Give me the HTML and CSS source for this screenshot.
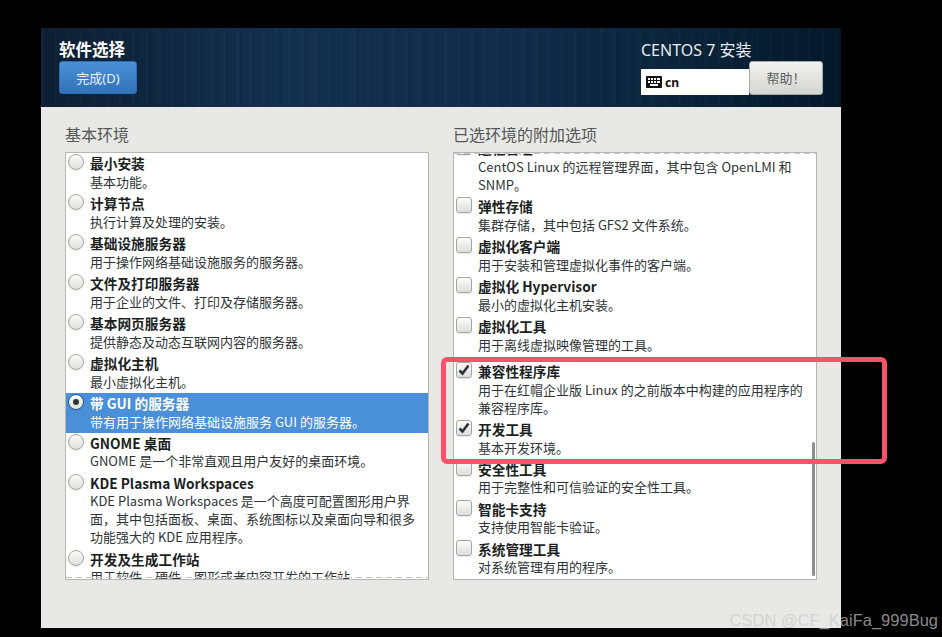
FILE: index.html
```html
<!DOCTYPE html>
<html lang="zh-CN">
<head>
    <meta charset="UTF-8">
    <title>软件选择 - CENTOS 7 安装</title>
    <link rel="stylesheet" href="styles.css">
</head>
<body>

    <div class="window">
        <header class="topbar">
            <div class="topbar-left">
                <h1>软件选择</h1>
                <button class="done-btn" type="button">完成(D)</button>
            </div>
            <div class="topbar-right">
                <div class="product">CENTOS 7 安装</div>
                <div class="topbar-tools">
                    <div class="layout-box">
                        <svg class="kbd-icon" width="16" height="12" viewBox="0 0 16 12">
                            <rect width="16" height="12" rx="1" fill="#111"/>
                            <g fill="#fff">
                                <rect x="2" y="2" width="2" height="2"/><rect x="5" y="2" width="2" height="2"/><rect x="8" y="2" width="2" height="2"/><rect x="11" y="2" width="3" height="2"/>
                                <rect x="2" y="5" width="2" height="2"/><rect x="5" y="5" width="2" height="2"/><rect x="8" y="5" width="2" height="2"/><rect x="11" y="5" width="3" height="2"/>
                                <rect x="4" y="8" width="8" height="2"/>
                            </g>
                        </svg>
                        <span>cn</span>
                    </div>
                    <button class="help-btn" type="button">帮助！</button>
                </div>
            </div>
        </header>

        <main class="content">
            <section class="col">
                <h2>基本环境</h2>
                <div class="list list-env">
                    <div class="item"><i class="radio"></i><div class="text"><b>最小安装</b><p>基本功能。</p></div></div>
                    <div class="item"><i class="radio"></i><div class="text"><b>计算节点</b><p>执行计算及处理的安装。</p></div></div>
                    <div class="item"><i class="radio"></i><div class="text"><b>基础设施服务器</b><p>用于操作网络基础设施服务的服务器。</p></div></div>
                    <div class="item"><i class="radio"></i><div class="text"><b>文件及打印服务器</b><p>用于企业的文件、打印及存储服务器。</p></div></div>
                    <div class="item"><i class="radio"></i><div class="text"><b>基本网页服务器</b><p>提供静态及动态互联网内容的服务器。</p></div></div>
                    <div class="item"><i class="radio"></i><div class="text"><b>虚拟化主机</b><p>最小虚拟化主机。</p></div></div>
                    <div class="item selected"><i class="radio on"></i><div class="text"><b>带 GUI 的服务器</b><p>带有用于操作网络基础设施服务 GUI 的服务器。</p></div></div>
                    <div class="item"><i class="radio"></i><div class="text"><b>GNOME 桌面</b><p>GNOME 是一个非常直观且用户友好的桌面环境。</p></div></div>
                    <div class="item"><i class="radio"></i><div class="text"><b>KDE Plasma Workspaces</b><p>KDE Plasma Workspaces 是一个高度可配置图形用户界面，其中包括面板、桌面、系统图标以及桌面向导和很多功能强大的 KDE 应用程序。</p></div></div>
                    <div class="item"><i class="radio"></i><div class="text"><b>开发及生成工作站</b><p>用于软件、硬件、图形或者内容开发的工作站。</p></div></div>
                    <div class="edge edge-bottom"></div>
                </div>
            </section>

            <section class="col">
                <h2>已选环境的附加选项</h2>
                <div class="list list-addons">
                    <div class="addons-inner">
                        <div class="item"><i class="check"></i><div class="text"><b>远程管理</b><p>CentOS Linux 的远程管理界面，其中包含 OpenLMI 和 SNMP。</p></div></div>
                        <div class="item"><i class="check"></i><div class="text"><b>弹性存储</b><p>集群存储，其中包括 GFS2 文件系统。</p></div></div>
                        <div class="item"><i class="check"></i><div class="text"><b>虚拟化客户端</b><p>用于安装和管理虚拟化事件的客户端。</p></div></div>
                        <div class="item"><i class="check"></i><div class="text"><b>虚拟化 Hypervisor</b><p>最小的虚拟化主机安装。</p></div></div>
                        <div class="item"><i class="check"></i><div class="text"><b>虚拟化工具</b><p>用于离线虚拟映像管理的工具。</p></div></div>
                        <div class="item after-sep"><i class="check"><svg width="16" height="16" viewBox="0 0 16 16"><path d="M3.5 8.5 L6.5 11.5 L12.5 3.5" fill="none" stroke="#2e3436" stroke-width="2.6"/></svg></i><div class="text"><b>兼容性程序库</b><p>用于在红帽企业版 Linux 的之前版本中构建的应用程序的兼容程序库。</p></div></div>
                        <div class="item"><i class="check"><svg width="16" height="16" viewBox="0 0 16 16"><path d="M3.5 8.5 L6.5 11.5 L12.5 3.5" fill="none" stroke="#2e3436" stroke-width="2.6"/></svg></i><div class="text"><b>开发工具</b><p>基本开发环境。</p></div></div>
                        <div class="item"><i class="check"></i><div class="text"><b>安全性工具</b><p>用于完整性和可信验证的安全性工具。</p></div></div>
                        <div class="item"><i class="check"></i><div class="text"><b>智能卡支持</b><p>支持使用智能卡验证。</p></div></div>
                        <div class="item"><i class="check"></i><div class="text"><b>系统管理工具</b><p>对系统管理有用的程序。</p></div></div>
                    </div>
                    <div class="edge edge-top"></div>
                    <div class="scroll-thumb"></div>
                </div>
            </section>
        </main>
    </div>

    <div class="annotation"></div>
    <div class="watermark">CSDN @CF_KaiFa_999Bug</div>

</body>
</html>
```

FILE: styles.css
```css
/* Basic reset */
* {
    margin: 0;
    padding: 0;
    box-sizing: border-box;
}

html, body {
    height: 100%;
    background: #000;
    overflow: hidden;
}

body {
    position: relative;
    padding: 28px 101px 9px 41px;
    font-family: "Noto Sans", "Noto Sans CJK SC", sans-serif;
    font-size: 13px;
    color: #2e3436;
}

.window {
    width: 800px;
    height: 600px;
    background: #e8e8e7;
}

/* Top bar */
.topbar {
    height: 79px;
    display: flex;
    justify-content: space-between;
    padding: 11px 18px 0;
    color: #fff;
    background:
        repeating-linear-gradient(90deg, rgba(255, 255, 255, 0.015) 0 3px, rgba(0, 0, 0, 0.04) 3px 7px, rgba(255, 255, 255, 0) 7px 13px),
        linear-gradient(90deg, #0d1f33 0%, #13304f 30%, #112c4a 60%, #0a243b 80%, #04182a 100%);
}

.topbar h1 {
    font-size: 16.5px;
    line-height: 21px;
    font-weight: 700;
    margin-bottom: 1px;
}

.done-btn {
    display: block;
    width: 78px;
    height: 33px;
    border: 1px solid #2a6fb5;
    border-radius: 3px;
    background: linear-gradient(#4a90d9, #3272b8);
    color: #e8f0f8;
    font: inherit;
}

.topbar-right {
    display: flex;
    flex-direction: column;
    padding-top: 1px;
}

.product {
    font-size: 16px;
    line-height: 21px;
    color: #e8ecef;
}

.topbar-tools {
    display: flex;
    align-items: flex-end;
    height: 34px;
}

.layout-box {
    width: 108px;
    height: 26px;
    background: #fff;
    display: flex;
    align-items: center;
    gap: 3px;
    padding-left: 5px;
    color: #111;
    font-size: 12px;
    font-weight: 700;
}

.help-btn {
    width: 74px;
    height: 34px;
    padding-bottom: 2px;
    border: 1px solid #a8a8a4;
    border-radius: 3px;
    background: linear-gradient(#f2f2f0, #d4d4d0);
    color: #5c5f60;
    font-family: "Noto Sans CJK SC", sans-serif;
    font-size: 13px;
}

/* Two columns */
.content {
    display: grid;
    grid-template-columns: 364px 364px;
    gap: 24px;
    padding: 18px 24px 0;
}

.col h2 {
    font-size: 16px;
    line-height: 21px;
    font-weight: 400;
    color: #555753;
    margin-bottom: 6px;
}

.list {
    position: relative;
    height: 428px;
    background: #fff;
    border: 1px solid #b6b6b3;
    overflow: hidden;
    font-family: "Noto Sans CJK SC", sans-serif;
}

.item {
    display: flex;
    padding-left: 2px;
    padding-bottom: 2.4px;
}

.text {
    flex: 1;
    padding-left: 6px;
    padding-right: 10px;
}

.text b {
    display: block;
    font-size: 13.7px;
    line-height: 21.6px;
    font-weight: 700;
    color: #1c1f1f;
}

.text p {
    line-height: 18px;
    margin-top: -2px;
}

.selected {
    background: #4a90d9;
}

.selected .text b,
.selected .text p {
    color: #fff;
}

/* Radio and check indicators */
.radio,
.check {
    flex: none;
    display: block;
    width: 16px;
    height: 16px;
    margin-top: 1px;
    border: 1px solid #a5a5a1;
    background: linear-gradient(#fbfbfa, #dededb);
    box-shadow: 0 1px 0 rgba(0, 0, 0, 0.08);
}

.radio {
    border-radius: 50%;
}

.radio.on {
    position: relative;
    border-color: #2a5a8c;
}

.radio.on::after {
    content: '';
    position: absolute;
    left: 4px;
    top: 4px;
    width: 6px;
    height: 6px;
    border-radius: 50%;
    background: #2e3436;
}

.check {
    border-radius: 3px;
}

.check svg {
    display: block;
    margin: -1px;
}

/* Right list starts scrolled part way down */
.addons-inner {
    margin-top: -15px;
}

.after-sep {
    margin-top: 5px;
}

.edge {
    position: absolute;
    left: 0;
    right: 0;
    height: 1px;
    background: repeating-linear-gradient(90deg, #c4c4c2 0 6px, #fff 6px 10px);
}

.edge-top {
    top: 0;
}

.edge-bottom {
    bottom: 1px;
}

.scroll-thumb {
    position: absolute;
    right: 1px;
    top: 289px;
    width: 3px;
    height: 134px;
    border-radius: 2px;
    background: #8f908e;
}

/* Red box drawn on the screenshot */
.annotation {
    position: absolute;
    left: 441px;
    top: 357px;
    width: 446px;
    height: 107px;
    border: 5px solid #fc5168;
    border-radius: 6px;
}

.watermark {
    position: absolute;
    right: 4px;
    top: 608px;
    font-family: "Liberation Sans", sans-serif;
    font-size: 16.5px;
    line-height: 24px;
    color: rgba(200, 200, 200, 0.7);
}
```
